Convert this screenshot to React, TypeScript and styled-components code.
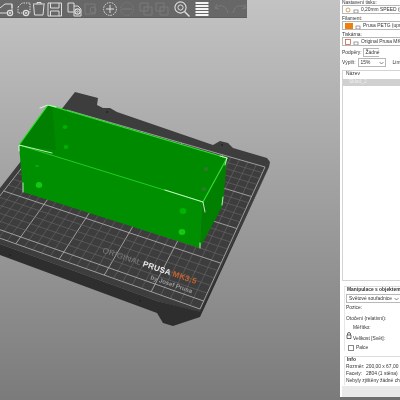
import React from 'react'
import styled, { createGlobalStyle } from 'styled-components'

const GlobalStyle = createGlobalStyle`
  html, body { margin: 0; padding: 0; background: #808080; }
  body { font-family: "Liberation Sans", Arial, sans-serif; }
`

const Window = styled.div`
  display: flex;
  width: 400px;
  height: 400px;
  overflow: hidden;
  filter: blur(0.45px);
`

const Viewport = styled.div`
  position: relative;
  width: 340px;
  height: 400px;
  flex: none;
  background: linear-gradient(#c3c3c3, #7b7b7b);
`

const Toolbar = styled.div`
  position: absolute;
  top: 0;
  left: 0;
  display: flex;
  align-items: center;
  width: 247px;
  height: 17px;
  background: #676767;
  border-bottom: 1px solid #5c5c5c;
  overflow: hidden;
`

const ToolIcon = styled.svg<{ $gap?: number; $faded?: boolean }>`
  flex: none;
  width: 16px;
  height: 16px;
  margin-left: ${({ $gap }) => $gap ?? 0}px;
  fill: none;
  stroke: ${({ $faded }) => ($faded ? '#7a7a7a' : '#dedede')};
  stroke-width: 1;
`

const Sidebar = styled.div`
  display: flex;
  flex-direction: column;
  width: 60px;
  height: 400px;
  flex: none;
  background: #fff;
  color: #333;
  font-size: 4.9px;
  line-height: 6px;
  white-space: nowrap;
  overflow: hidden;
`

const Label = styled.div<{ $top?: number }>`
  padding-left: 2px;
  margin-top: ${({ $top }) => $top ?? 0}px;
  height: 5px;
  line-height: 5px;
`

const Combo = styled.div<{ $left?: number; $width?: number }>`
  display: flex;
  align-items: center;
  gap: 2px;
  height: 9px;
  margin-left: ${({ $left }) => $left ?? 2}px;
  width: ${({ $width }) => ($width ? `${$width}px` : 'auto')};
  padding-left: 2px;
  border: 1px solid #b8b8b8;
  border-right-width: ${({ $width }) => ($width ? 1 : 0)}px;
  box-sizing: border-box;
  flex: none;
`

const Swatch = styled.span`
  width: 8px;
  height: 6px;
  background: #f0800c;
  flex: none;
`

const Row = styled.div<{ $top?: number }>`
  display: flex;
  align-items: center;
  padding-left: 2px;
  margin-top: ${({ $top }) => $top ?? 0}px;
  height: 9px;
`

const Chevron = styled.svg`
  width: 5px;
  height: 4px;
  margin-left: auto;
  margin-right: 1px;
  fill: none;
  stroke: #555;
  stroke-width: 0.7;
`

const ObjectList = styled.div`
  height: 211px;
  margin: 3px 0 0 2px;
  border: 1px solid #d4d4d4;
  border-right: 0;
  box-sizing: border-box;
  flex: none;
`

const ListHeader = styled.div`
  height: 7px;
  padding-left: 3px;
`

const ListSelected = styled.div`
  height: 7px;
  margin-top: 1px;
  background: #d0d0d0;
  color: #eee;
  padding-left: 6px;
`

const Group = styled.div<{ $top: number; $height: number }>`
  margin: ${({ $top }) => $top}px 0 0 4px;
  height: ${({ $height }) => $height}px;
  border-top: 1px solid #ddd;
  border-left: 1px solid #e6e6e6;
  box-sizing: border-box;
  flex: none;
  padding-left: 1px;
`

const GroupTitle = styled.div`
  font-weight: bold;
  margin-top: -3px;
  height: 7px;
  background: #fff;
  display: inline-block;
  padding: 0 1px;
`

const Line = styled.div<{ $top?: number; $left?: number }>`
  height: 6px;
  margin-top: ${({ $top }) => $top ?? 0}px;
  margin-left: ${({ $left }) => $left ?? 0}px;
`

const ScaleBlock = styled.div`
  position: relative;
`

const LockMark = styled.svg`
  position: absolute;
  left: 0;
  top: 7px;
  width: 6px;
  height: 7px;
  fill: none;
  stroke: #444;
  stroke-width: 0.8;
`

const CheckRow = styled.div`
  display: flex;
  align-items: center;
  gap: 2px;
  height: 7px;
  margin: 2px 0 0 2px;
`

const CheckBox = styled.span`
  width: 6px;
  height: 6px;
  border: 1px solid #888;
  box-sizing: border-box;
`

const InfoLine = styled.div`
  display: flex;
  height: 7px;
`

const InfoKey = styled.span`
  width: 20px;
  flex: none;
`

const Footer = styled.div`
  height: 11px;
  margin: 1px 0 0 2px;
  background: #e9e9e9;
  flex: none;
`

const BottomStrip = styled.div`
  flex: 1;
  background: #6f6f6f;
`

const Small = styled.svg`
  width: 6px;
  height: 6px;
  flex: none;
  fill: none;
  stroke: #777;
  stroke-width: 0.7;
`

type P = [number, number]

// unit square -> quad, for the bed grid lines
const homography = (a: P, b: P, c: P, d: P) => {
  const dx1 = b[0] - c[0]
  const dx2 = d[0] - c[0]
  const dy1 = b[1] - c[1]
  const dy2 = d[1] - c[1]
  const sx = a[0] - b[0] + c[0] - d[0]
  const sy = a[1] - b[1] + c[1] - d[1]
  const den = dx1 * dy2 - dx2 * dy1
  const g = (sx * dy2 - dx2 * sy) / den
  const h = (dx1 * sy - sx * dy1) / den
  return (u: number, v: number): P => {
    const w = g * u + h * v + 1
    return [
      ((b[0] - a[0] + g * b[0]) * u + (d[0] - a[0] + h * d[0]) * v + a[0]) / w,
      ((b[1] - a[1] + g * b[1]) * u + (d[1] - a[1] + h * d[1]) * v + a[1]) / w,
    ]
  }
}

const bed = homography([67, 110], [265, 167], [200, 309], [-26, 229])

const gridLines = () => {
  const lines: { from: P; to: P; major: boolean; key: string }[] = []
  for (let i = 0; i <= 25; i++) {
    lines.push({ from: bed(i / 25, 0), to: bed(i / 25, 1), major: i % 5 === 0, key: `u${i}` })
  }
  for (let j = 0; j <= 21; j++) {
    const major = j % 5 === 0 || j === 21
    lines.push({ from: bed(0, j / 21), to: bed(1, j / 21), major, key: `v${j}` })
  }
  return lines
}

const platePoints =
  '75,92 98,98 97,105 103,108 110,108 117,112 213,145 220,141 228,143 233,148 267,158 270,162 269,167 200,313 157,301 0,244 0,188'
const plateSide = '269,167 200,317 197,318 173,326 163,323 157,313 0,255 0,244 157,301 200,312'

const Bed = () => (
  <g>
    <polygon points={platePoints} fill="#3d3d3d" />
    <polygon points={plateSide} fill="#2e2e2e" />
    {gridLines().map((l) => (
      <line
        key={l.key}
        x1={l.from[0]}
        y1={l.from[1]}
        x2={l.to[0]}
        y2={l.to[1]}
        stroke={l.major ? '#b5b5b5' : '#686868'}
        strokeWidth={l.major ? 0.8 : 0.6}
      />
    ))}
    <circle cx="107" cy="112" r="1" fill="#222" />
    <circle cx="222" cy="145" r="1" fill="#222" />
    <circle cx="10" cy="255" r="0.8" fill="#1c1c1c" />
    <circle cx="140" cy="301" r="0.8" fill="#1c1c1c" />
    <g transform="translate(102 252.5) rotate(18.6)">
      <text fontFamily="Liberation Sans" fontSize="8.1" letterSpacing="0.2">
        <tspan fill="#7d7d7d">ORIGINAL </tspan>
        <tspan fill="#e8e8e8" fontWeight="bold">PRUSA </tspan>
        <tspan fill="#c8622a" fontWeight="bold">MK3.5</tspan>
      </text>
    </g>
    <text
      transform="translate(150 279) rotate(19)"
      fontFamily="Liberation Sans"
      fontSize="6.2"
      fontWeight="bold"
      fill="#9a9a9a"
    >
      by Josef Prusa
    </text>
  </g>
)

const Box = () => (
  <g>
    {/* inside of the box */}
    <polygon points="48,105 227,158 203,202 19,145" fill="#008a00" />
    <polygon points="48,105 52,107 56,150 19,145" fill="#007f00" />
    <ellipse cx="65" cy="127" rx="2.4" ry="2" fill="#00b000" />
    <ellipse cx="66" cy="147" rx="2.4" ry="2" fill="#00b000" />
    <ellipse cx="206" cy="169" rx="2.4" ry="2" fill="#2a7a2a" />
    <ellipse cx="204" cy="189" rx="2.4" ry="2" fill="#2a7a2a" />
    {/* outer walls */}
    <polygon points="203,202 227,158 223,205 200,248" fill="#007f00" />
    <polygon points="19,145 203,202 200,248 23,192" fill="#008f00" />
    <ellipse cx="37" cy="166" rx="2.2" ry="1" fill="#00b000" />
    <ellipse cx="39" cy="185" rx="3.2" ry="3" fill="#14c814" />
    <ellipse cx="183" cy="211" rx="3.4" ry="3" fill="#00b400" />
    <ellipse cx="182" cy="232" rx="3.4" ry="3" fill="#14c814" />
    {/* rim */}
    <g fill="none" strokeLinecap="round">
      <polyline points="19,145 48,105 227,158" stroke="#2ee02e" strokeWidth="1.2" />
      <line x1="203" y1="202" x2="227" y2="158" stroke="#2ee02e" strokeWidth="1.2" />
      <line x1="19" y1="145" x2="203" y2="202" stroke="#22d822" strokeWidth="0.9" />
      <g stroke="#f2fff2" strokeWidth="0.8">
        <polyline points="19,151 19,145 52,153" />
        <polyline points="40,108 48,105 56,107" />
        <polyline points="165,190 203,202 205,212" />
        <polyline points="225,165 227,158 220,156" />
        <line x1="23" y1="183" x2="23" y2="192" />
        <line x1="200" y1="243" x2="200" y2="248" />
        <line x1="223" y1="197" x2="222" y2="205" />
      </g>
    </g>
  </g>
)

const Scene = styled.svg`
  display: block;
`

const Gear = ({ x, y }: { x: number; y: number }) => (
  <>
    <circle cx={x} cy={y} r="2.6" fill="#676767" strokeWidth="1.2" />
    <circle cx={x} cy={y} r="0.8" />
  </>
)

function App() {
  return (
    <Window>
      <GlobalStyle />
      <Viewport>
        <Scene width="340" height="400" viewBox="0 0 340 400">
          <Bed />
          <Box />
        </Scene>
        <Toolbar>
          <ToolIcon viewBox="0 0 16 16">
            <path d="M0 7 L5 3 H12 V12 H0 M12 3 V7" />
            <Gear x={10} y={12} />
          </ToolIcon>
          <ToolIcon viewBox="0 0 16 16">
            <path d="M2 6 L6 2 H14 V12 H2 Z" strokeDasharray="1.4 1" />
            <Gear x={10} y={12} />
          </ToolIcon>
          <ToolIcon viewBox="0 0 16 16" $gap={-1}>
            <path d="M2.5 3.5 L3.5 14 H12 L13 3.5 M2 3 H14 M6 3 V1.5 H10 V3" />
          </ToolIcon>
          <ToolIcon viewBox="0 0 16 16">
            <path d="M1 2 H14.5 V15 H1 Z M3.5 2 V7 H12 V2 M3.5 15 V10 H12 V15" />
          </ToolIcon>
          <ToolIcon viewBox="0 0 16 16" $gap={4}>
            <path d="M1 2 H7 V11 H1 Z M7 5 H11 L14 8 V15 H7 V11" />
            <Gear x={10.5} y={10.5} />
          </ToolIcon>
          <ToolIcon viewBox="0 0 16 16" $faded $gap={1}>
            <path d="M1 3 H11 V13 H1 Z" />
            <circle cx="9" cy="9" r="3" />
          </ToolIcon>
          <ToolIcon viewBox="0 0 16 16" $gap={2}>
            <circle cx="8" cy="8" r="6.4" strokeDasharray="1.6 1" />
            <path d="M8 4 V12 M4 8 H12" />
          </ToolIcon>
          <ToolIcon viewBox="0 0 16 16" $faded $gap={1}>
            <circle cx="8" cy="8" r="6.4" strokeDasharray="1.6 1" />
            <path d="M3 8 H13" />
          </ToolIcon>
          <ToolIcon viewBox="0 0 16 16" $faded $gap={3}>
            <path d="M2 2 H10 V10 H2 Z M6 6 H14 V14 H6 Z" />
          </ToolIcon>
          <ToolIcon viewBox="0 0 16 16" $faded>
            <path d="M2 2 H10 V10 H2 Z M6 6 H14 V14 H6 Z" />
          </ToolIcon>
          <ToolIcon viewBox="0 0 16 16" $gap={4}>
            <circle cx="6.5" cy="6.5" r="5.6" strokeWidth="1.1" />
            <circle cx="6.5" cy="6.5" r="2.6" />
            <path d="M10.5 10.5 L15.5 15.5" strokeWidth="1.5" />
          </ToolIcon>
          <ToolIcon viewBox="0 0 16 16" $gap={4}>
            <path
              d="M1.5 2 H14.5 M1.5 5 H14.5 M1.5 8 H14.5 M1.5 11 H14.5 M1.5 14 H14.5"
              stroke="#f4f4f4"
              strokeWidth="2"
            />
          </ToolIcon>
          <ToolIcon viewBox="0 0 16 16" $faded $gap={4}>
            <path d="M3 3 L1 7 L5 8 M1.5 7 C6 3 12 4 14 12" />
          </ToolIcon>
          <ToolIcon viewBox="0 0 16 16" $faded $gap={1}>
            <path d="M13 3 L15 7 L11 8 M14.5 7 C10 3 4 4 2 12" />
          </ToolIcon>
        </Toolbar>
      </Viewport>
      <Sidebar>
        <Label>Nastavení tisku:</Label>
        <Combo>
          <Small viewBox="0 0 6 6"><circle cx="3" cy="3" r="2" stroke="#c08030" /></Small>
          <Small viewBox="0 0 6 6"><rect x="1" y="3" width="4" height="3" /></Small>
          0,20mm SPEED (uprav
        </Combo>
        <Label $top={2}>Filament:</Label>
        <Combo>
          <Swatch />
          <Small viewBox="0 0 6 6"><rect x="1" y="3" width="4" height="3" /></Small>
          Prusa PETG (upraven
        </Combo>
        <Label $top={2}>Tiskárna:</Label>
        <Combo>
          <Small viewBox="0 0 6 6"><rect x="0.5" y="0.5" width="5" height="5" stroke="#c05030" /></Small>
          <Small viewBox="0 0 6 6"><rect x="1" y="3" width="4" height="3" /></Small>
          Original Prusa MK3.
        </Combo>
        <Row $top={2}>
          Podpěry:
          <Combo $left={1}>Žádné</Combo>
        </Row>
        <Row $top={1}>
          Výplň:
          <Combo $left={2} $width={28}>
            15%
            <Chevron viewBox="0 0 5 4"><path d="M0.5 1 L2.5 3 L4.5 1" /></Chevron>
          </Combo>
          <Line $left={7}>Lim</Line>
        </Row>
        <ObjectList>
          <ListHeader>Název</ListHeader>
          <ListSelected>Sklad_2</ListSelected>
        </ObjectList>
        <Group $top={5} $height={65}>
          <GroupTitle>Manipulace s objektem</GroupTitle>
          <Combo $left={0}>
            Světové souřadnice
            <Chevron viewBox="0 0 5 4"><path d="M0.5 1 L2.5 3 L4.5 1" /></Chevron>
          </Combo>
          <Line $top={2}>Pozice:</Line>
          <Line $top={5}>Otočení (relativní):</Line>
          <ScaleBlock>
            <LockMark viewBox="0 0 6 7">
              <path d="M1.5 3 V2 A1.5 1.5 0 0 1 4.5 2 V3 M1 3 H5 V6.5 H1 Z" />
            </LockMark>
            <Line $top={3} $left={7}>Měřítko:</Line>
            <Line $top={5} $left={7}>Velikost [Svět]:</Line>
          </ScaleBlock>
          <CheckRow>
            <CheckBox />
            Palce
          </CheckRow>
        </Group>
        <Group $top={5} $height={29}>
          <GroupTitle>Info</GroupTitle>
          <InfoLine><InfoKey>Rozměr:</InfoKey>200,00 x 67,00 x 70</InfoLine>
          <InfoLine><InfoKey>Facety:</InfoKey>2804 (1 stěna)</InfoLine>
          <InfoLine>Nebyly zjištěny žádné chyby</InfoLine>
        </Group>
        <Footer />
        <BottomStrip />
      </Sidebar>
    </Window>
  )
}

export default App
